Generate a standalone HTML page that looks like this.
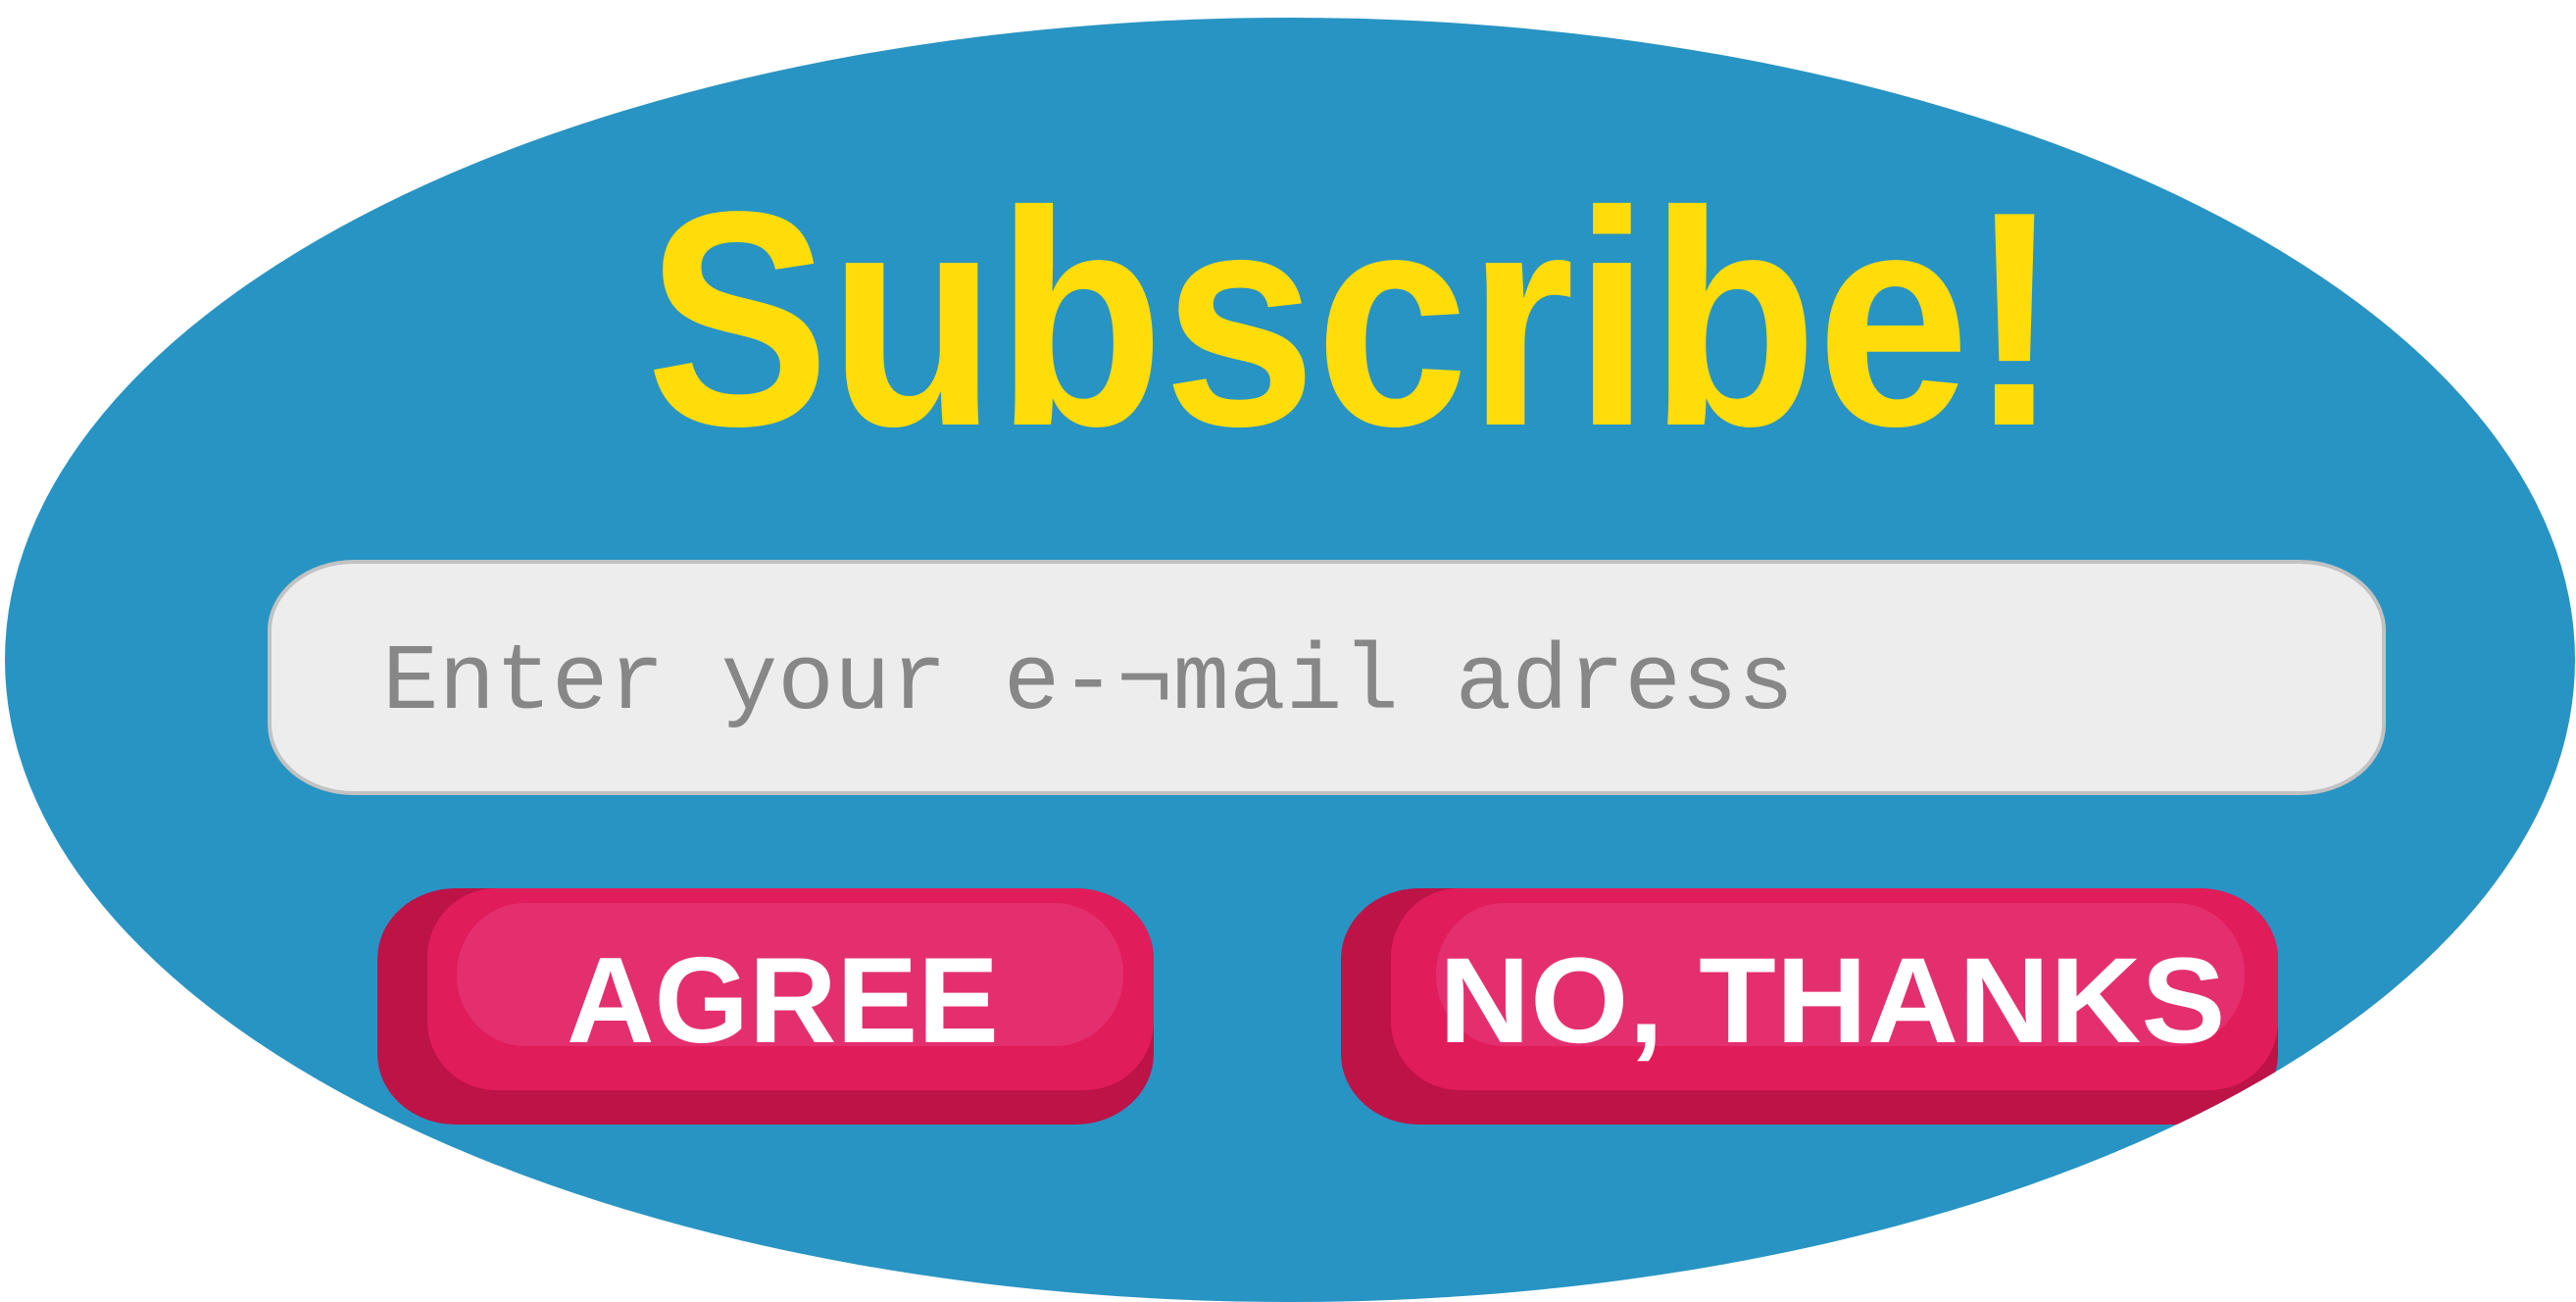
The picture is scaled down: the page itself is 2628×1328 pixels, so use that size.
<!DOCTYPE html>
<html><head><meta charset="utf-8"><style>
html,body{margin:0;padding:0;background:#fff;}
body{width:2628px;height:1326px;position:relative;overflow:hidden;}
.ell{position:absolute;left:5px;top:18px;width:2622px;height:1310px;border-radius:50%;background:#2894c3;overflow:hidden;}
.abs{position:absolute;}
.title{width:1500px;height:320px;}
.title span{display:inline-block;font-family:"Liberation Sans",sans-serif;font-weight:bold;font-size:312px;line-height:320px;color:#ffdc0a;transform:scaleX(0.9);transform-origin:0 0;white-space:nowrap;letter-spacing:-1px;}
.input{width:2161px;height:240px;box-sizing:border-box;background:#ededed;border:4px solid #c2c2c2;border-radius:88px/72px;}
.input span{position:absolute;left:113px;top:67px;font-family:"Liberation Mono",monospace;font-size:96px;line-height:110px;color:#878787;white-space:nowrap;}
.btn{background:#bd1347;border-radius:80px/72px;overflow:hidden;}
.body{position:absolute;left:51px;top:0;right:0;bottom:35px;background:#e11c5a;border-radius:70px/70px;}
.hl{position:absolute;background:#e42f6f;border-radius:70px/72px;}
.lbl{position:absolute;font-family:"Liberation Sans",sans-serif;font-weight:bold;font-size:124px;line-height:122px;color:#fff;white-space:nowrap;transform-origin:0 0;}
</style></head><body>
<div class="ell">
  <div class="abs title" style="left:654px;top:148px"><span>Subscribe!</span></div>
  <div class="abs input" style="left:268px;top:553px"><span>Enter your e-¬mail adress</span></div>
  <div class="abs btn" style="left:380px;top:888px;width:792px;height:241px">
    <div class="body"></div>
    <div class="hl" style="left:81px;top:15px;width:680px;height:146px"></div>
    <div class="lbl" style="left:193px;top:54px">AGREE</div>
  </div>
  <div class="abs btn" style="left:1363px;top:888px;width:956px;height:241px">
    <div class="body"></div>
    <div class="hl" style="left:97px;top:15px;width:825px;height:146px"></div>
    <div class="lbl" style="left:100px;top:54px;transform:scaleX(1.04)">NO, THANKS</div>
  </div>
</div>
</body></html>
